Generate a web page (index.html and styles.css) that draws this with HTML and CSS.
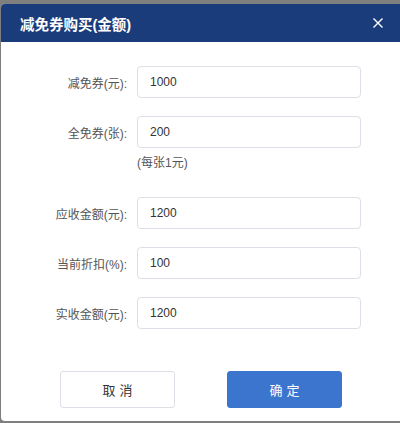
FILE: index.html
```html
<!DOCTYPE html>
<html lang="zh">
<head>
<meta charset="utf-8">
<link rel="stylesheet" href="styles.css">
</head>
<body>
<div class="dialog">
  <div class="header">
    <span class="title">减免券购买(金额)</span>
    <svg class="close" width="12" height="12" viewBox="0 0 12 12"><path d="M1.5 1.5 L10.5 10.5 M10.5 1.5 L1.5 10.5" stroke="#fff" stroke-width="1.4" fill="none"/></svg>
  </div>
  <div class="form">
    <div class="row"><label class="label">减免券(元):</label><div class="input">1000</div></div>
    <div class="row"><label class="label">全免券(张):</label><div class="input">200</div></div>
    <div class="hint">(每张1元)</div>
    <div class="row"><label class="label">应收金额(元):</label><div class="input">1200</div></div>
    <div class="row"><label class="label">当前折扣(%):</label><div class="input">100</div></div>
    <div class="row"><label class="label">实收金额(元):</label><div class="input">1200</div></div>
  </div>
  <div class="footer">
    <button class="btn cancel">取消</button>
    <button class="btn ok">确定</button>
  </div>
</div>
</body>
</html>
```
FILE: styles.css
```css
html, body {
  margin: 0;
  padding: 0;
  height: 100%;
  overflow: hidden;
}
body {
  background: #7f7f7f;
  font-family: "Liberation Sans", "Noto Sans CJK SC", sans-serif;
}
.dialog {
  margin: 4px 0 0 1px;
  width: 404px;
  height: 417px;
  background: #fff;
  border-radius: 4px;
  overflow: hidden;
}
.header {
  height: 38px;
  background: #1b3c7b;
  display: flex;
  align-items: center;
  justify-content: space-between;
  padding: 0 21px 0 19px;
}
.title {
  color: #fff;
  font-size: 14.5px;
  font-weight: bold;
}
.close {
  display: block;
}
.form {
  padding-top: 24px;
  display: flex;
  flex-direction: column;
}
.row {
  display: flex;
  align-items: center;
  height: 32px;
  margin-bottom: 18px;
}
.label {
  width: 126px;
  text-align: right;
  font-size: 12px;
  color: #555;
  padding-right: 10px;
}
.input {
  width: 210px;
  height: 30px;
  border: 1px solid #dcdfe6;
  border-radius: 4px;
  padding-left: 12px;
  display: flex;
  align-items: center;
  font-size: 12px;
  color: #333;
}
.hint {
  margin-left: 136px;
  margin-top: -13px;
  height: 20px;
  line-height: 20px;
  font-size: 12px;
  color: #555;
  margin-bottom: 24px;
}
.footer {
  display: flex;
  padding: 24px 0 0 59px;
  gap: 52px;
}
.btn {
  width: 115px;
  height: 37px;
  border-radius: 3px;
  font-family: "Liberation Sans", "Noto Sans CJK SC", sans-serif;
  font-size: 13px;
  letter-spacing: 4px;
  text-indent: 4px;
  padding: 0;
}
.cancel {
  background: #fff;
  border: 1px solid #dcdfe6;
  color: #333;
}
.ok {
  background: #3c75cd;
  border: 1px solid #3c75cd;
  color: #fff;
}
```
